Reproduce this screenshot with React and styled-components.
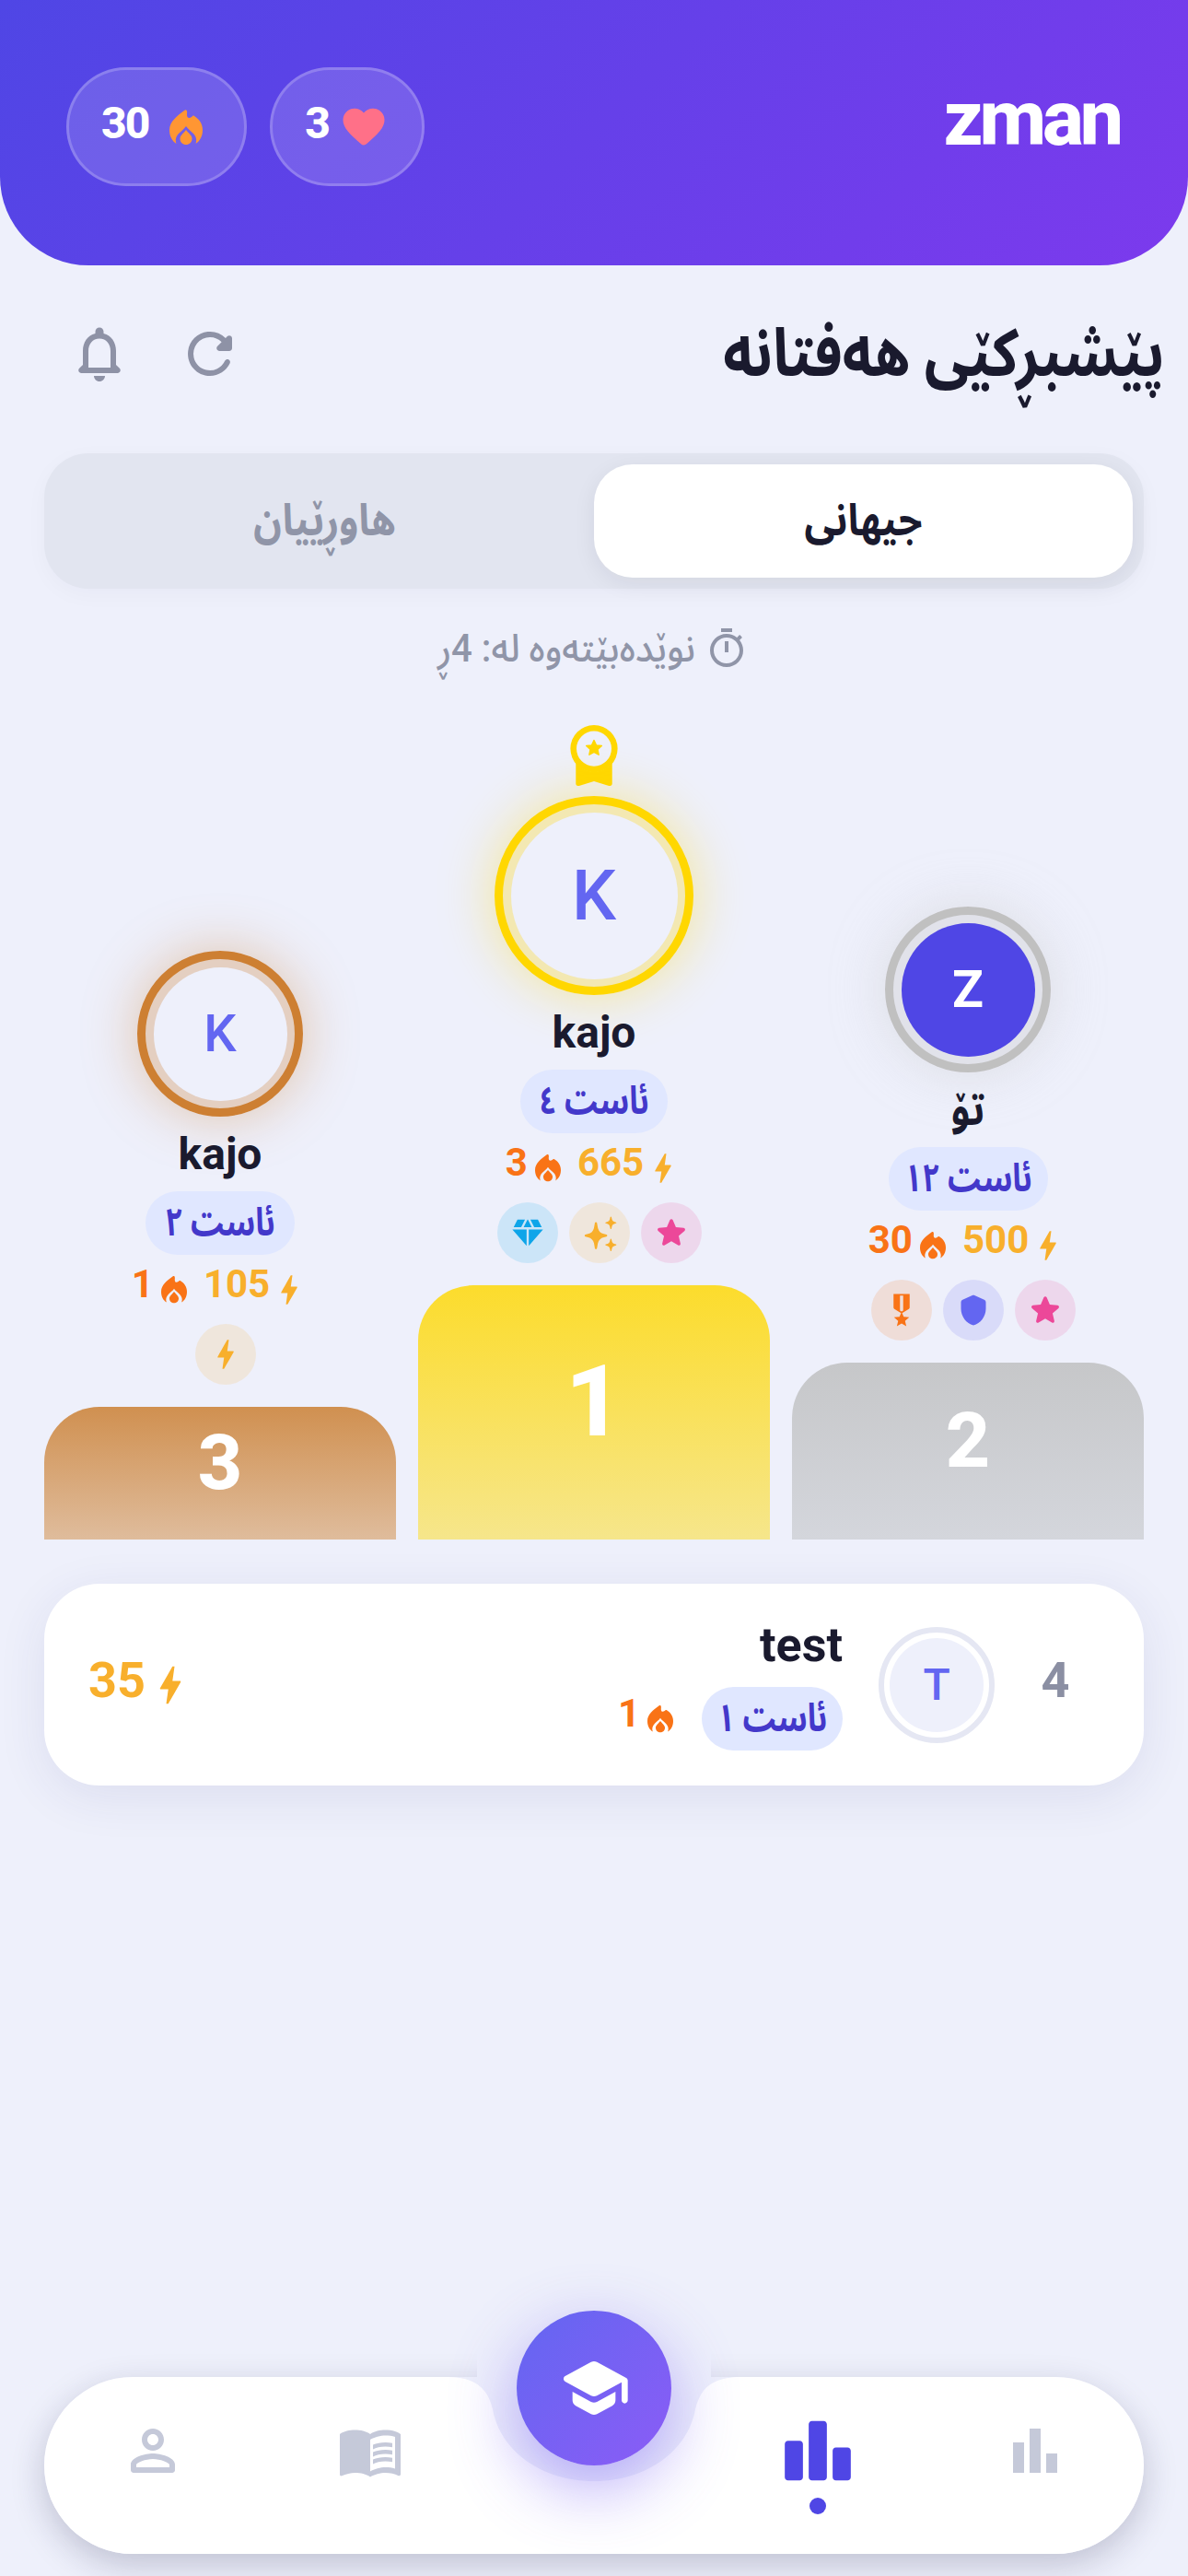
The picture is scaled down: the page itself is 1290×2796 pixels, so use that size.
import React from 'react';
import styled, { createGlobalStyle } from 'styled-components';

const Global = createGlobalStyle`
  html, body { margin: 0; padding: 0; background: #eef0fb; }
  * { box-sizing: border-box; }
  body { font-family: Roboto, "Noto Sans Arabic", "DejaVu Sans Condensed", sans-serif; }
`;

const P = {
  flame: 'M16 2C19 0 19.5 3 19 6C18.8 10 21 11 24 9C25 8 26 7 27 8C32 11 36 16 36 23C36 30 33 35 28.5 38C30 34 29 30 26 27C23 24 20 22 18 19C16 22 13 24 10 27C7 30 6 34 7.5 38C3 35 0 30 0 23C0 14 8 8 16 2ZM18 23C21 27 24.5 29 24.5 32.5C24.5 36.5 21.5 39 18 39C14.5 39 11.5 36.5 11.5 32.5C11.5 29 15 27 18 23Z',
  heart: 'M13.35 20.13c-.76.69-1.93.69-2.69-.01l-.11-.1C5.3 15.27 1.87 12.16 2 8.28c.06-1.7.93-3.33 2.34-4.29 2.64-1.8 5.9-.96 7.66 1.1 1.76-2.06 5.02-2.91 7.66-1.1 1.41.96 2.28 2.59 2.34 4.29.14 3.88-3.3 6.99-8.55 11.76l-.1.09z',
  bolt: 'M11 21h-1l1-7H7.5c-.88 0-.33-.75-.31-.78C8.48 10.94 10.42 7.54 13.01 3h1l-1 7h3.51c.4 0 .62.19.4.66C12.97 17.55 11 21 11 21z',
  bell: 'M19.29 17.29 18 16v-5c0-3.07-1.64-5.64-4.5-6.32V4c0-.83-.67-1.5-1.5-1.5s-1.5.67-1.5 1.5v.68C7.63 5.36 6 7.92 6 11v5l-1.29 1.29c-.63.63-.19 1.71.7 1.71h13.17c.9 0 1.34-1.08.71-1.71zM16 17H8v-6c0-2.48 1.51-4.5 4-4.5s4 2.02 4 4.5v6zm-4 5c1.1 0 2-.9 2-2h-4c0 1.1.9 2 2 2z',
  refresh: 'M17.65 6.35a7.95 7.95 0 0 0-6.48-2.31c-3.67.37-6.69 3.35-7.1 7.02C3.52 15.91 7.27 20 12 20a7.98 7.98 0 0 0 7.21-4.56c.32-.67-.16-1.44-.9-1.44-.37 0-.72.2-.88.53a5.994 5.994 0 0 1-6.8 3.31c-2.22-.49-4.01-2.3-4.48-4.52A6.002 6.002 0 0 1 12 6c1.66 0 3.14.69 4.22 1.78l-1.51 1.51c-.63.63-.19 1.71.7 1.71H19c.55 0 1-.45 1-1V6.41c0-.89-1.08-1.34-1.71-.71l-.64.65z',
  timer: 'M15 1H9v2h6V1zm-4 13h2V8h-2v6zm8.03-6.61 1.42-1.42c-.43-.51-.9-.99-1.41-1.41l-1.42 1.42A8.962 8.962 0 0 0 12 4c-4.97 0-9 4.03-9 9s4.02 9 9 9 9-4.03 9-9c0-2.12-.74-4.07-1.97-5.61zM12 20c-3.87 0-7-3.13-7-7s3.13-7 7-7 7 3.13 7 7-3.13 7-7 7z',
  star: 'M12 17.27l4.15 2.51c.76.46 1.69-.22 1.49-1.08l-1.1-4.72 3.67-3.18c.67-.58.31-1.68-.57-1.75l-4.83-.41-1.89-4.46c-.34-.81-1.5-.81-1.84 0L9.19 8.63l-4.83.41c-.88.07-1.24 1.17-.57 1.75l3.67 3.18-1.1 4.72c-.2.86.73 1.54 1.49 1.08l4.15-2.5z',
  diamond: 'M12.16 3h-.32L9.21 8.25h5.58L12.16 3zM16.46 8.25h5.16L19 3h-5.16l2.62 5.25zM22.5 9.75h-9.75V21L22.5 9.75zM11.25 21V9.75H1.5L11.25 21zM7.54 8.25 10.16 3H5L2.38 8.25h5.16z',
  sparkle: 'M9.14 5.9c.13-.7 1.13-.7 1.26 0l.6 3.2c.45 1.9 1.75 3.2 3.65 3.65l1.65.4c.66.16.66 1.1 0 1.26l-1.65.4c-1.9.45-3.2 1.75-3.65 3.65l-.6 3.2c-.13.7-1.13.7-1.26 0l-.6-3.2c-.45-1.9-1.75-3.2-3.65-3.65l-1.65-.4c-.66-.16-.66-1.1 0-1.26l1.65-.4c1.9-.45 3.2-1.75 3.65-3.65l.6-3.2zM18.7 2.3c.07-.4.6-.4.68 0l.3 1.3c.2.9.8 1.5 1.7 1.7l.8.2c.4.1.4.6 0 .7l-.8.2c-.9.2-1.5.8-1.7 1.7l-.3 1.3c-.08.4-.6.4-.68 0l-.3-1.3c-.2-.9-.8-1.5-1.7-1.7l-.8-.2c-.4-.1-.4-.6 0-.7l.8-.2c.9-.2 1.5-.8 1.7-1.7l.3-1.3zM18.7 16c.07-.4.6-.4.68 0l.3 1.3c.2.9.8 1.5 1.7 1.7l.8.2c.4.1.4.6 0 .7l-.8.2c-.9.2-1.5.8-1.7 1.7l-.3 1.3c-.08.4-.6.4-.68 0l-.3-1.3c-.2-.9-.8-1.5-1.7-1.7l-.8-.2c-.4-.1-.4-.6 0-.7l.8-.2c.9-.2 1.5-.8 1.7-1.7l.3-1.3z',
  tech: 'M17 10.43V2H7v8.43c0 .35.18.68.49.86l4.18 2.51-.99 2.34-3.41.29 2.59 2.24L9.07 22 12 20.23 14.93 22l-.78-3.33 2.59-2.24-3.41-.29-.99-2.34 4.18-2.51c.31-.18.48-.5.48-.86zm-4 1.8-1 .6-1-.6V3h2v9.23z',
  shield: 'M11.19 1.36l-7 3.11C3.47 4.79 3 5.51 3 6.3V11c0 5.55 3.84 10.74 9 12 5.16-1.26 9-6.45 9-12V6.3c0-.79-.47-1.51-1.19-1.83l-7-3.11c-.51-.23-1.11-.23-1.62 0z',
  school: 'M5 13.18v2.81c0 .73.4 1.41 1.04 1.76l5 2.73c.6.33 1.32.33 1.92 0l5-2.73c.64-.35 1.04-1.03 1.04-1.76v-2.81l-6.04 3.3c-.6.33-1.32.33-1.92 0L5 13.18zm6.04-9.66-8.43 4.6c-.69.38-.69 1.38 0 1.76l8.43 4.6c.6.33 1.32.33 1.92 0L21 10.09V16c0 .55.45 1 1 1s1-.45 1-1V9.59c0-.37-.2-.7-.52-.88l-9.52-5.19a2.04 2.04 0 0 0-1.92 0z',
  person: 'M12 6c1.1 0 2 .9 2 2s-.9 2-2 2-2-.9-2-2 .9-2 2-2m0 9c2.7 0 5.8 1.29 6 2v1H6v-.99c.2-.72 3.3-2.01 6-2.01m0-11C9.79 4 8 5.79 8 8s1.79 4 4 4 4-1.79 4-4-1.79-4-4-4zm0 9c-2.67 0-8 1.34-8 4v2c0 .55.45 1 1 1h14c.55 0 1-.45 1-1v-2c0-2.66-5.33-4-8-4z',
  book: 'M21 5c-1.11-.35-2.33-.5-3.5-.5-1.95 0-4.05.4-5.5 1.5-1.45-1.1-3.55-1.5-5.5-1.5S2.45 4.9 1 6v14.65c0 .25.25.5.5.5.1 0 .15-.05.25-.05C3.1 20.45 5.05 20 6.5 20c1.95 0 4.05.4 5.5 1.5 1.35-.85 3.8-1.5 5.5-1.5 1.65 0 3.35.3 4.75 1.05.1.05.15.05.25.05.25 0 .5-.25.5-.5V6c-.6-.45-1.25-.75-2-1zm0 13.5c-1.1-.35-2.3-.5-3.5-.5-1.7 0-4.15.65-5.5 1.5V8c1.35-.85 3.8-1.5 5.5-1.5 1.2 0 2.4.15 3.5.5v11.5zM17.5 10.5c.88 0 1.73.09 2.5.26V9.24c-.79-.15-1.64-.24-2.5-.24-1.7 0-3.24.29-4.5.83v1.66c1.13-.64 2.7-.99 4.5-.99zM13 12.49v1.66c1.13-.64 2.7-.99 4.5-.99.88 0 1.73.09 2.5.26V11.9c-.79-.15-1.64-.24-2.5-.24-1.7 0-3.24.3-4.5.83zM17.5 14.33c-1.7 0-3.24.29-4.5.83v1.66c1.13-.64 2.7-.99 4.5-.99.88 0 1.73.09 2.5.26v-1.52c-.79-.16-1.64-.24-2.5-.24z',
  bars: 'M4 9h4v11H4zM16 13h4v7h-4zM10 4h4v16h-4z',
  board: 'M6.5 21H3c-.55 0-1-.45-1-1V10c0-.55.45-1 1-1h3.5c.55 0 1 .45 1 1v10c0 .55-.45 1-1 1zm7.25-18h-3.5c-.55 0-1 .45-1 1v16c0 .55.45 1 1 1h3.5c.55 0 1-.45 1-1V4c0-.55-.45-1-1-1zM21 11h-3.5c-.55 0-1 .45-1 1v8c0 .55.45 1 1 1H21c.55 0 1-.45 1-1v-8c0-.55-.45-1-1-1z',
};

const Svg = styled.svg`
  display: block;
  flex: none;
  fill: ${(p) => p.$color};
`;
const Icon = ({ d, size, color }) => (
  <Svg viewBox="0 0 24 24" width={size} height={size} $color={color}><path d={d} /></Svg>
);
const Flame = ({ w, color }) => (
  <Svg viewBox="0 0 36 40" width={w} height={(w * 40) / 36} $color={color}><path d={P.flame} fillRule="evenodd" /></Svg>
);

/* Arabic-script label narrowed horizontally to the reference's tighter face */
const Squeeze = styled.span`
  display: inline-flex;
  justify-content: center;
  width: ${(p) => p.$w}px;
  white-space: nowrap;
  transform: scaleX(${(p) => p.$x});
`;

const Page = styled.div`
  width: 1290px;
  height: 2796px;
  background: #eef0fb;
  display: flex;
  flex-direction: column;
  overflow: hidden;
  direction: rtl;
`;

const Header = styled.header`
  height: 288px;
  flex: none;
  direction: ltr;
  background: linear-gradient(135deg, #4f46e5, #7c3aed);
  border-radius: 0 0 96px 96px;
  padding: 73px 74px 86px 72px;
  display: flex;
  align-items: center;
  justify-content: space-between;
`;
const Pills = styled.div`
  display: flex;
  gap: 25px;
`;
const Pill = styled.div`
  height: 129px;
  padding: 0 36px 0 35px;
  display: flex;
  align-items: center;
  gap: ${(p) => p.$gap}px;
  border-radius: 65px;
  background: rgba(255, 255, 255, 0.15);
  border: 3px solid rgba(255, 255, 255, 0.2);
`;
const PillValue = styled.span`
  color: #fff;
  font-size: 48px;
  line-height: 56px;
  font-weight: 800;
  letter-spacing: -2px;
  padding-bottom: 8px;
`;
const FlameBox = styled.span`
  width: 54px;
  display: flex;
  justify-content: center;
`;
const Brand = styled.div`
  color: #fff;
  font-size: 84px;
  line-height: 90px;
  font-weight: 800;
  letter-spacing: -4px;
  margin-top: -18px;
`;

const TitleRow = styled.div`
  margin-top: 60px;
  height: 72px;
  padding: 0 25px 0 72px;
  display: flex;
  align-items: center;
  justify-content: space-between;
`;
const Title = styled.h1`
  margin: 0;
  color: #1a1a2e;
  font-size: 72px;
  line-height: 72px;
  font-weight: 700;
  white-space: nowrap;
`;
const ToolGroup = styled.div`
  display: flex;
  gap: 48px;
`;

const Tabs = styled.div`
  margin: 72px 48px 0;
  height: 147px;
  padding: 12px;
  border-radius: 48px;
  background: #e2e5f0;
  box-shadow: 0 6px 24px rgba(26, 26, 70, 0.03);
  display: flex;
`;
const Tab = styled.div`
  flex: 1;
  display: flex;
  align-items: center;
  justify-content: center;
  border-radius: 42px;
  font-size: 48px;
  font-weight: 700;
  color: ${(p) => (p.$active ? '#1a1a2e' : '#9095a8')};
  background: ${(p) => (p.$active ? '#fff' : 'transparent')};
  box-shadow: ${(p) => (p.$active ? '0 6px 24px rgba(26,26,46,0.07)' : 'none')};
`;

const Countdown = styled.div`
  margin-top: 41px;
  height: 48px;
  display: flex;
  align-items: center;
  justify-content: center;
  gap: 12px;
  color: #9095a8;
  font-size: 42px;
  font-weight: 500;
  white-space: nowrap;
`;

const Podium = styled.section`
  margin: 59px 48px 0;
  display: flex;
  align-items: flex-end;
  gap: 24px;
`;
const Column = styled.div`
  width: 382px;
  display: flex;
  flex-direction: column;
  align-items: center;
`;
const Medal = styled.svg`
  display: block;
  margin-bottom: 10px;
`;
const Ring = styled.div`
  width: ${(p) => p.$size}px;
  height: ${(p) => p.$size}px;
  border-radius: 50%;
  border: 9.5px solid ${(p) => p.$color};
  background: ${(p) => p.$color}4a;
  box-shadow: 0 0 60px ${(p) => p.$color}${(p) => p.$glow};
  padding: 8.5px;
  flex: none;
`;
const Face = styled.div`
  width: 100%;
  height: 100%;
  border-radius: 50%;
  display: flex;
  align-items: center;
  justify-content: center;
  background: ${(p) => (p.$me ? '#4f46e5' : '#eef0fb')};
  color: ${(p) => (p.$me ? '#fff' : '#6366f1')};
  font-size: ${(p) => p.$font}px;
  font-weight: ${(p) => (p.$me ? 700 : 500)};
`;
const Name = styled.div`
  margin: 12px 0;
  height: 57px;
  line-height: 57px;
  font-size: 48px;
  font-weight: 700;
  color: #1a1a2e;
`;
const Level = styled.div`
  height: 69px;
  padding: 0 22px;
  display: flex;
  align-items: center;
  border-radius: 36px;
  background: #e0e7ff;
  color: #4338ca;
  font-size: 42px;
  font-weight: 700;
  white-space: nowrap;
`;
const Stats = styled.div`
  direction: ltr;
  margin: 12px 0;
  height: 51px;
  display: flex;
  align-items: center;
  gap: 18px;
`;
const Stat = styled.div`
  display: flex;
  align-items: center;
  gap: ${(p) => p.$gap || 0}px;
`;
const Num = styled.span`
  color: ${(p) => p.$color};
  font-size: ${(p) => p.$size || 42}px;
  line-height: 50px;
  font-weight: 700;
  padding-bottom: ${(p) => p.$lift || 12}px;
`;
const Badges = styled.div`
  direction: ltr;
  height: 66px;
  display: flex;
`;
const Badge = styled.div`
  width: 66px;
  height: 66px;
  margin-left: 12px;
  border-radius: 50%;
  display: flex;
  align-items: center;
  justify-content: center;
  background: ${(p) => p.$color}26;
`;
const Block = styled.div`
  margin-top: 24px;
  width: 100%;
  height: ${(p) => p.$h}px;
  padding-bottom: 24px;
  border-radius: 60px 60px 0 0;
  background: linear-gradient(180deg, ${(p) => p.$from}, ${(p) => p.$to});
  display: flex;
  align-items: center;
  justify-content: center;
  color: #fff;
  font-size: ${(p) => p.$font}px;
  font-weight: 800;
`;

const Card = styled.section`
  margin: 48px 48px 0;
  height: 219px;
  padding: 0 48px 0 48px;
  border-radius: 60px;
  background: #fff;
  box-shadow: 0 12px 54px rgba(40, 40, 120, 0.09);
  display: flex;
  align-items: center;
`;
const Rank = styled.div`
  width: 96px;
  padding-bottom: 10px;
  text-align: center;
  color: #8b8fa3;
  font-size: 54px;
  font-weight: 700;
  flex: none;
`;
const SmallRing = styled.div`
  margin: 0 18px 0 39px;
  width: 126px;
  height: 126px;
  border-radius: 50%;
  border: 6px solid #e5e7f3;
  padding: 6px;
  flex: none;
`;
const Info = styled.div`
  display: flex;
  flex-direction: column;
  align-items: flex-start;
  gap: 17px;
`;
const InfoName = styled.div`
  height: 57px;
  line-height: 57px;
  font-size: 52px;
  font-weight: 700;
  color: #1a1a2e;
`;
const InfoRow = styled.div`
  display: flex;
  align-items: center;
  gap: 31px;
`;
const Score = styled.div`
  direction: ltr;
  margin-right: auto;
  display: flex;
  align-items: center;
  gap: 0;
`;

const Nav = styled.nav`
  position: relative;
  margin: auto 48px 24px;
  height: 192px;
  flex: none;
  display: grid;
  grid-template-columns: 236px 236px 1fr 236px 236px;
  direction: ltr;
  align-items: center;
  padding-bottom: 32px;
`;
const NavShadow = styled.div`
  position: absolute;
  inset: 0;
  border-radius: 96px;
  box-shadow: 0 12px 36px rgba(26, 26, 70, 0.22);
  clip-path: polygon(-80px -80px, 470px -80px, 470px 125px, 724px 125px, 724px -80px, 1274px -80px, 1274px 280px, -80px 280px);
`;
const NavSurface = styled.div`
  position: absolute;
  inset: 0;
  background: #fff;
  clip-path: path('M96 0L438 0C470 0 482 14 487 35C495 80 540 113 597 113C654 113 699 80 707 35C712 14 724 0 756 0L1098 0A96 96 0 0 1 1098 192L96 192A96 96 0 0 1 96 0Z');
`;
const NavItem = styled.div`
  position: relative;
  display: flex;
  justify-content: center;
  grid-column: ${(p) => p.$col};
`;
const Dot = styled.span`
  position: absolute;
  top: 94px;
  left: 50%;
  margin-left: -9px;
  width: 18px;
  height: 18px;
  border-radius: 50%;
  background: #4f46e5;
`;
const Fab = styled.div`
  position: absolute;
  top: -72px;
  left: 513px;
  width: 168px;
  height: 168px;
  border-radius: 50%;
  background: linear-gradient(135deg, #6366f1, #8b5cf6);
  box-shadow: 0 24px 72px rgba(99, 70, 241, 0.45);
  display: flex;
  align-items: center;
  justify-content: center;
`;

const AMBER = '#f8af2c';
const ORANGE = '#f97316';
const PINK = '#ec4899';
const SKY = '#0ea5e9';
const INDIGO = '#6366f1';

const badgeSets = {
  first: [
    { d: P.diamond, c: SKY, s: 38 },
    { d: P.sparkle, c: AMBER, s: 42 },
    { d: P.star, c: PINK, s: 42 },
  ],
  second: [
    { d: P.tech, c: ORANGE, s: 42 },
    { d: P.shield, c: INDIGO, s: 36 },
    { d: P.star, c: PINK, s: 42 },
  ],
  third: [{ d: P.bolt, c: AMBER, s: 42 }],
};

const Player = ({ medal, size, ring, glow, letter, font, me, name, level, levelW, streak, xp, badges, block }) => (
  <Column>
    {medal && (
      <Medal viewBox="0 0 52 68" width="52" height="67" fill="#ffd700">
        <path fillRule="evenodd" d="M26 0a26 26 0 1 1 0 52a26 26 0 1 1 0-52ZM26 6.7a19.3 19.3 0 1 0 0 38.6a19.3 19.3 0 1 0 0-38.6Z" />
        <path d="M6 42V64.5c0 2 1.5 3 3.5 2.4L26 62l16.5 4.9c2 .6 3.5-.4 3.5-2.4V42A26 26 0 0 1 6 42Z" />
        <path d="M26 16.8l2.5 5.4 5.9.7-4.4 4 1.2 5.8-5.2-2.9-5.2 2.9 1.2-5.8-4.4-4 5.9-.7z" stroke="#ffd700" strokeWidth="1.5" strokeLinejoin="round" />
      </Medal>
    )}
    <Ring $size={size} $color={ring} $glow={glow}>
      <Face $me={me} $font={font}>{letter}</Face>
    </Ring>
    <Name>{name}</Name>
    <Level><Squeeze $w={levelW} $x={0.8}>{level}</Squeeze></Level>
    <Stats>
      <Stat $gap={8}>
        <Num $color={ORANGE}>{streak}</Num>
        <Flame w={28} color={ORANGE} />
      </Stat>
      <Stat>
        <Num $color={AMBER}>{xp}</Num>
        <Icon d={P.bolt} size={42} color={AMBER} />
      </Stat>
    </Stats>
    <Badges>
      {badges.map((b, i) => (
        <Badge key={i} $color={b.c}><Icon d={b.d} size={b.s} color={b.c} /></Badge>
      ))}
    </Badges>
    <Block $h={block.h} $from={block.from} $to={block.to} $font={block.font}>{block.n}</Block>
  </Column>
);

export default function App() {
  return (
    <>
      <Global />
      <Page>
        <Header>
          <Pills>
            <Pill $gap={14}>
              <PillValue>30</PillValue>
              <FlameBox><Flame w={36} color="#ff9633" /></FlameBox>
            </Pill>
            <Pill $gap={11}>
              <PillValue>3</PillValue>
              <Icon d={P.heart} size={54} color="#ff7088" />
            </Pill>
          </Pills>
          <Brand>zman</Brand>
        </Header>

        <TitleRow>
          <Title><Squeeze $w={480} $x={0.854}>پێشبڕکێی هەفتانە</Squeeze></Title>
          <ToolGroup>
            <Icon d={P.refresh} size={72} color="#8e92a6" />
            <Icon d={P.bell} size={72} color="#8e92a6" />
          </ToolGroup>
        </TitleRow>

        <Tabs>
          <Tab $active><Squeeze $w={127} $x={0.877}>جیهانی</Squeeze></Tab>
          <Tab><Squeeze $w={155} $x={0.88}>هاوڕێیان</Squeeze></Tab>
        </Tabs>

        <Countdown>
          <Icon d={P.timer} size={48} color="#9095a8" />
          <Squeeze $w={276} $x={0.955}>نوێدەبێتەوە لە: 4ڕ</Squeeze>
        </Countdown>

        <Podium>
          <Player size={180} ring="#c0c0c0" glow="66" letter="Z" font={56} me name={<Squeeze $w={34} $x={0.86}>تۆ</Squeeze>} level="ئاست ١٢" levelW={129} streak="30" xp="500" badges={badgeSets.second} block={{ h: 192, from: '#c6c7c9', to: '#d4d6dc', font: 84, n: 2 }} />
          <Player medal size={216} ring="#ffd700" glow="66" letter="K" font={76} name="kajo" level="ئاست ٤" levelW={116} streak="3" xp="665" badges={badgeSets.first} block={{ h: 276, from: '#fcdc2c', to: '#f6e68b', font: 108, n: 1 }} />
          <Player size={180} ring="#cd7f32" glow="66" letter="K" font={56} name="kajo" level="ئاست ٢" levelW={118} streak="1" xp="105" badges={badgeSets.third} block={{ h: 144, from: '#d09050', to: '#dfbc9c', font: 84, n: 3 }} />
        </Podium>

        <Card>
          <Rank>4</Rank>
          <SmallRing>
            <Face $font={48}>T</Face>
          </SmallRing>
          <Info>
            <InfoName>test</InfoName>
            <InfoRow>
              <Level><Squeeze $w={109} $x={0.8}>ئاست ١</Squeeze></Level>
              <Stat $gap={8} dir="ltr">
                <Num $color={ORANGE}>1</Num>
                <Flame w={28} color={ORANGE} />
              </Stat>
            </InfoRow>
          </Info>
          <Score>
            <Num $color={AMBER} $size={54} $lift={10}>35</Num>
            <Icon d={P.bolt} size={54} color={AMBER} />
          </Score>
        </Card>

        <Nav>
          <NavShadow />
          <NavSurface />
          <NavItem $col={1}><Icon d={P.person} size={72} color="#c5c9d9" /></NavItem>
          <NavItem $col={2}><Icon d={P.book} size={72} color="#c5c9d9" /></NavItem>
          <Fab><Icon d={P.school} size={80} color="#fff" /></Fab>
          <NavItem $col={4}>
            <Icon d={P.board} size={86} color="#4f46e5" />
            <Dot />
          </NavItem>
          <NavItem $col={5}><Icon d={P.bars} size={72} color="#c5c9d9" /></NavItem>
        </Nav>
      </Page>
    </>
  );
}
